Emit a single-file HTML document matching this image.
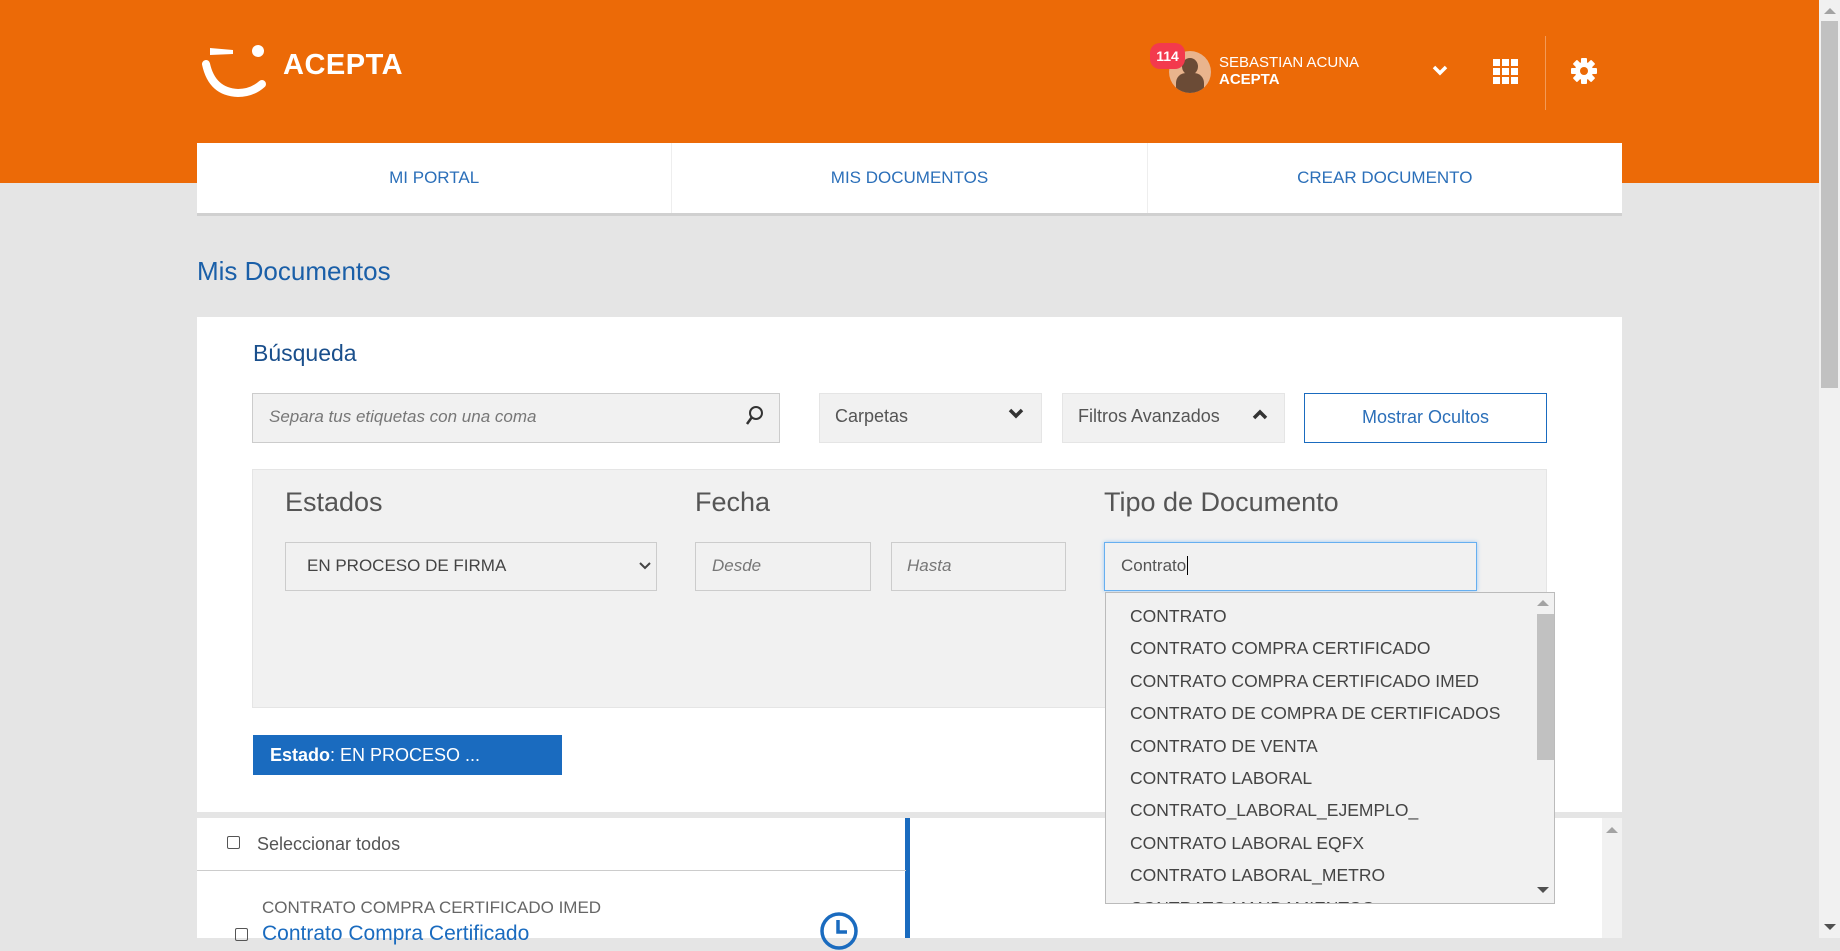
<!DOCTYPE html>
<html><head><meta charset="utf-8"><style>
*{margin:0;padding:0;box-sizing:border-box}
body{width:1840px;height:938px;overflow:hidden;background:#e5e5e5;font-family:"Liberation Sans Narrow","Liberation Sans",sans-serif;position:relative}
.a{position:absolute}
.n{font-family:"Liberation Sans Narrow","Liberation Sans",sans-serif}
.inp{background:#f1f1f1;border:1px solid #ccc}
.dd div{height:32.4px;line-height:32.4px;padding-left:24px;font-family:"Liberation Sans",sans-serif;font-size:17.5px;color:#444;white-space:nowrap}
</style></head><body>
<div class="a" style="left:0;top:0;width:1819px;height:183px;background:#ec6a07"></div>
<!-- logo -->
<svg class="a" style="left:200px;top:40px" width="80" height="60" viewBox="0 0 80 60">
<path d="M6 24 Q12 52 38 53 Q52 53 62 44" stroke="#fff" stroke-width="8" fill="none" stroke-linecap="round"/>
<path d="M10 8 L33 10 L33 14 L10 15 Z" fill="#fff"/>
<circle cx="58" cy="11" r="6" fill="#fff"/>
</svg>
<div class="a" style="left:283px;top:49px;font-family:'Liberation Sans',sans-serif;font-weight:bold;font-size:29px;color:#fff;letter-spacing:0.5px">ACEPTA</div>
<!-- user -->
<div class="a" style="left:1169px;top:51px;width:42px;height:42px;border-radius:50%;background:#e9b48d;overflow:hidden">
<div class="a" style="left:13px;top:7px;width:16px;height:17px;border-radius:50%;background:#6b4b36"></div>
<div class="a" style="left:7px;top:22px;width:28px;height:24px;border-radius:10px 10px 0 0;background:#6b4b36"></div></div>
<div class="a" style="left:1150px;top:43px;width:35px;height:26px;border-radius:10px;background:#f33a4d;color:#fff;font-family:'Liberation Sans',sans-serif;font-weight:bold;font-size:14px;text-align:center;line-height:26px">114</div>
<div class="a" style="left:1219px;top:54px;color:#fff;font-size:15px">SEBASTIAN ACUNA</div>
<div class="a" style="left:1219px;top:71px;color:#fff;font-size:15px;font-weight:bold">ACEPTA</div>
<svg class="a" style="left:1432px;top:65px" width="16" height="12"><path d="M2 2 L8 8 L14 2" stroke="#fff" stroke-width="3.5" fill="none"/></svg>
<svg class="a" style="left:1493px;top:59px" width="26" height="26" fill="#fff"><rect x="0" y="0" width="7" height="7"/><rect x="9" y="0" width="7" height="7"/><rect x="18" y="0" width="7" height="7"/><rect x="0" y="9" width="7" height="7"/><rect x="9" y="9" width="7" height="7"/><rect x="18" y="9" width="7" height="7"/><rect x="0" y="18" width="7" height="7"/><rect x="9" y="18" width="7" height="7"/><rect x="18" y="18" width="7" height="7"/></svg>
<div class="a" style="left:1545px;top:36px;width:1px;height:74px;background:#f39a57"></div>
<svg class="a" style="left:1571px;top:58px" width="26" height="26" viewBox="0 0 26 26"><g fill="#fff"><circle cx="13" cy="13" r="9"/><rect x="10" y="0" width="6" height="26" rx="1"/><rect x="0" y="10" width="26" height="6" rx="1"/><rect x="10" y="0" width="6" height="26" rx="1" transform="rotate(45 13 13)"/><rect x="10" y="0" width="6" height="26" rx="1" transform="rotate(-45 13 13)"/></g><circle cx="13" cy="13" r="4" fill="#ec6a07"/></svg>
<!-- nav -->
<div class="a" style="left:197px;top:143px;width:1425px;height:73px;background:#fff;border-bottom:3px solid #d0d0d0;display:flex">
<div style="flex:1;text-align:center;line-height:70px;font-size:17px;color:#2b6fb9;border-right:1px solid #eee">MI PORTAL</div>
<div style="flex:1;text-align:center;line-height:70px;font-size:17px;color:#2b6fb9;border-right:1px solid #eee">MIS DOCUMENTOS</div>
<div style="flex:1;text-align:center;line-height:70px;font-size:17px;color:#2b6fb9">CREAR DOCUMENTO</div></div>
<div class="a" style="left:197px;top:256px;font-family:'Liberation Sans',sans-serif;font-size:26px;color:#1a5fa8">Mis Documentos</div>
<!-- card -->
<div class="a" style="left:197px;top:317px;width:1425px;height:495px;background:#fff"></div>
<div class="a" style="left:253px;top:340px;font-family:'Liberation Sans',sans-serif;font-size:23px;color:#1a4f8c">Búsqueda</div>
<div class="a inp" style="left:252px;top:393px;width:528px;height:50px"></div>
<div class="a" style="left:269px;top:407px;font-size:17px;color:#777;font-style:italic">Separa tus etiquetas con una coma</div>
<svg class="a" style="left:745px;top:405px" width="20" height="22"><circle cx="11" cy="8" r="6" stroke="#333" stroke-width="2" fill="none"/><path d="M7 12 L2 19" stroke="#333" stroke-width="2.5"/></svg>
<div class="a inp" style="left:819px;top:393px;width:223px;height:50px;border-color:#e5e5e5"></div>
<div class="a" style="left:835px;top:406px;font-size:18px;color:#555">Carpetas</div>
<svg class="a" style="left:1008px;top:408px" width="16" height="12"><path d="M2 2 L8 8 L14 2" stroke="#333" stroke-width="3.5" fill="none"/></svg>
<div class="a inp" style="left:1062px;top:393px;width:223px;height:50px;border-color:#e5e5e5"></div>
<div class="a" style="left:1078px;top:406px;font-size:18px;color:#555">Filtros Avanzados</div>
<svg class="a" style="left:1252px;top:408px" width="16" height="12"><path d="M2 10 L8 4 L14 10" stroke="#333" stroke-width="3.5" fill="none"/></svg>
<div class="a" style="left:1304px;top:393px;width:243px;height:50px;border:1.5px solid #1a6bbf;text-align:center;line-height:47px;font-size:18px;color:#2b6fb9">Mostrar Ocultos</div>
<!-- panel -->
<div class="a" style="left:252px;top:469px;width:1295px;height:239px;background:#f1f1f1;border:1px solid #e5e5e5"></div>
<div class="a" style="left:285px;top:487px;font-size:27px;color:#555">Estados</div>
<div class="a" style="left:695px;top:487px;font-size:27px;color:#555">Fecha</div>
<div class="a" style="left:1104px;top:487px;font-size:27px;color:#555">Tipo de Documento</div>
<div class="a inp" style="left:285px;top:542px;width:372px;height:49px"></div>
<div class="a" style="left:307px;top:556px;font-size:17px;color:#444">EN PROCESO DE FIRMA</div>
<svg class="a" style="left:639px;top:562px" width="12" height="9"><path d="M1 1 L6 6 L11 1" stroke="#444" stroke-width="2" fill="none"/></svg>
<div class="a inp" style="left:695px;top:542px;width:176px;height:49px"></div>
<div class="a" style="left:712px;top:556px;font-size:17px;color:#777;font-style:italic">Desde</div>
<div class="a inp" style="left:891px;top:542px;width:175px;height:49px"></div>
<div class="a" style="left:907px;top:556px;font-size:17px;color:#777;font-style:italic">Hasta</div>
<div class="a" style="left:1104px;top:542px;width:373px;height:49px;background:#f1f1f1;border:1px solid #66aff0;box-shadow:0 0 4px #9cc9f3"></div>
<div class="a" style="left:1121px;top:556px;font-size:17px;color:#555">Contrato<span style="border-left:1px solid #000;margin-left:1px"></span></div>
<div class="a" style="left:253px;top:735px;width:309px;height:40px;background:#1a6bbf;color:#fff;font-size:18px;line-height:40px;padding-left:17px"><b>Estado</b>: EN PROCESO ...</div>
<!-- lower -->
<div class="a" style="left:197px;top:818px;width:709px;height:120px;background:#fff"></div>
<div class="a" style="left:905px;top:818px;width:5px;height:120px;background:#1a6bbf"></div>
<div class="a" style="left:910px;top:818px;width:692px;height:120px;background:#fff"></div>
<div class="a" style="left:1602px;top:818px;width:20px;height:120px;background:#f1f1f1"></div>
<svg class="a" style="left:1606px;top:826px" width="12" height="8"><path d="M0 7 L6 1 L12 7Z" fill="#a3a3a3"/></svg>
<div class="a" style="left:227px;top:836px;width:13px;height:13px;border:1.5px solid #555;border-radius:2px"></div>
<div class="a" style="left:257px;top:834px;font-size:18px;color:#555">Seleccionar todos</div>
<div class="a" style="left:197px;top:870px;width:709px;height:1px;background:#ccc"></div>
<div class="a" style="left:262px;top:898px;font-size:17px;color:#666">CONTRATO COMPRA CERTIFICADO IMED</div>
<div class="a" style="left:235px;top:928px;width:13px;height:13px;border:1.5px solid #555;border-radius:2px"></div>
<div class="a" style="left:262px;top:922px;font-size:21px;color:#1a6bbf">Contrato Compra Certificado</div>
<svg class="a" style="left:819px;top:911px" width="40" height="40"><circle cx="20" cy="20" r="17" stroke="#1a6bbf" stroke-width="3.5" fill="none"/><path d="M19 9 V21 H28" stroke="#1a6bbf" stroke-width="3.5" fill="none"/></svg>
<!-- dropdown -->
<div class="a dd" style="left:1105px;top:592px;width:450px;height:312px;background:#f1f1f1;border:1px solid #bbb;overflow:hidden;padding-top:7px">
<div>CONTRATO</div><div>CONTRATO COMPRA CERTIFICADO</div><div>CONTRATO COMPRA CERTIFICADO IMED</div><div>CONTRATO DE COMPRA DE CERTIFICADOS</div><div>CONTRATO DE VENTA</div><div>CONTRATO LABORAL</div><div>CONTRATO_LABORAL_EJEMPLO_</div><div>CONTRATO LABORAL EQFX</div><div>CONTRATO LABORAL_METRO</div><div>CONTRATO MANDAMIENTOS</div>
<div class="a" style="left:428px;top:0;width:21px;height:310px;background:#f1f1f1;padding:0"></div>
<div class="a" style="left:431px;top:21px;width:17px;height:146px;background:#c1c1c1;padding:0"></div>
</div>
<svg class="a" style="left:1537px;top:599px" width="12" height="8"><path d="M0 7 L6 1 L12 7Z" fill="#a3a3a3"/></svg>
<svg class="a" style="left:1537px;top:886px" width="12" height="8"><path d="M0 1 L6 7 L12 1Z" fill="#505050"/></svg>
<!-- page scrollbar -->
<div class="a" style="left:1819px;top:0;width:21px;height:938px;background:#f1f1f1"></div>
<div class="a" style="left:1821px;top:21px;width:17px;height:367px;background:#c1c1c1"></div>
<svg class="a" style="left:1824px;top:8px" width="12" height="7"><path d="M0 6 L6 0 L12 6Z" fill="#a3a3a3"/></svg>
<svg class="a" style="left:1824px;top:924px" width="12" height="7"><path d="M0 0 L6 6 L12 0Z" fill="#505050"/></svg>
</body></html>
